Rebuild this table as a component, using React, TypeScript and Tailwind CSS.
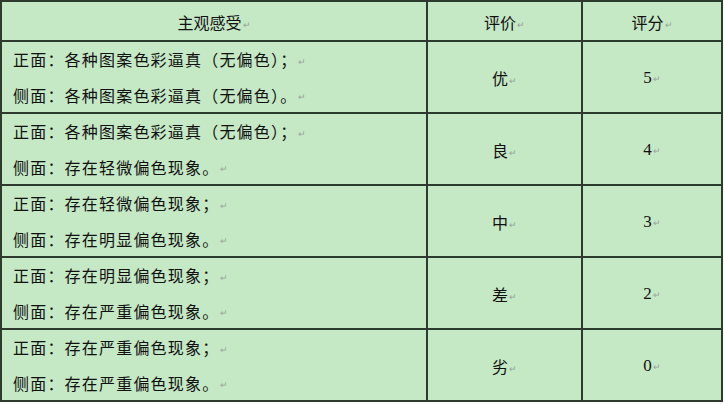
const rows = [
  { front: '正面：各种图案色彩逼真（无偏色）；', side: '侧面：各种图案色彩逼真（无偏色）。', grade: '优', score: '5' },
  { front: '正面：各种图案色彩逼真（无偏色）；', side: '侧面：存在轻微偏色现象。', grade: '良', score: '4' },
  { front: '正面：存在轻微偏色现象；', side: '侧面：存在明显偏色现象。', grade: '中', score: '3' },
  { front: '正面：存在明显偏色现象；', side: '侧面：存在严重偏色现象。', grade: '差', score: '2' },
  { front: '正面：存在严重偏色现象；', side: '侧面：存在严重偏色现象。', grade: '劣', score: '0' },
];

const cjk = { fontFamily: '"Noto Sans CJK SC", sans-serif' };
const serif = { fontFamily: '"Liberation Serif", "Noto Sans CJK SC", serif' };

function Mark() {
  return <span className="ml-[1px] align-middle text-[9px] tracking-normal text-[#9aa39a]">↵</span>;
}

const cell = 'border-2 border-[#2f3a2f] p-0';

export default function App() {
  return (
    <div className="h-[404px] w-[725px] bg-white">
      <table className="w-[723px] border-collapse bg-[#c5e8c5] text-[16px] text-[#111]" style={cjk}>
        <colgroup>
          <col className="w-[426px]" />
          <col className="w-[155px]" />
          <col />
        </colgroup>
        <thead>
          <tr className="h-[40px]">
            <th className={`${cell} pt-[2px] font-normal`}>
              主观感受<Mark />
            </th>
            <th className={`${cell} pt-[2px] font-normal`}>
              评价<Mark />
            </th>
            <th className={`${cell} pt-[2px] font-normal`}>
              评分<Mark />
            </th>
          </tr>
        </thead>
        <tbody>
          {rows.map((r, i) => (
            <tr key={i} className="h-[72px]">
              <td className={cell}>
                <div className="flex flex-col gap-[13px] pl-[11px] pt-[2px] tracking-[1.2px]">
                  <div className="leading-[20px]">
                    {r.front}
                    <Mark />
                  </div>
                  <div className="leading-[20px]">
                    {r.side}
                    <Mark />
                  </div>
                </div>
              </td>
              <td className={`${cell} pt-[2px] text-center`}>
                {r.grade}
                <Mark />
              </td>
              <td className={`${cell} pt-[2px] text-center text-[17px]`} style={serif}>
                {r.score}
                <Mark />
              </td>
            </tr>
          ))}
        </tbody>
      </table>
    </div>
  );
}
